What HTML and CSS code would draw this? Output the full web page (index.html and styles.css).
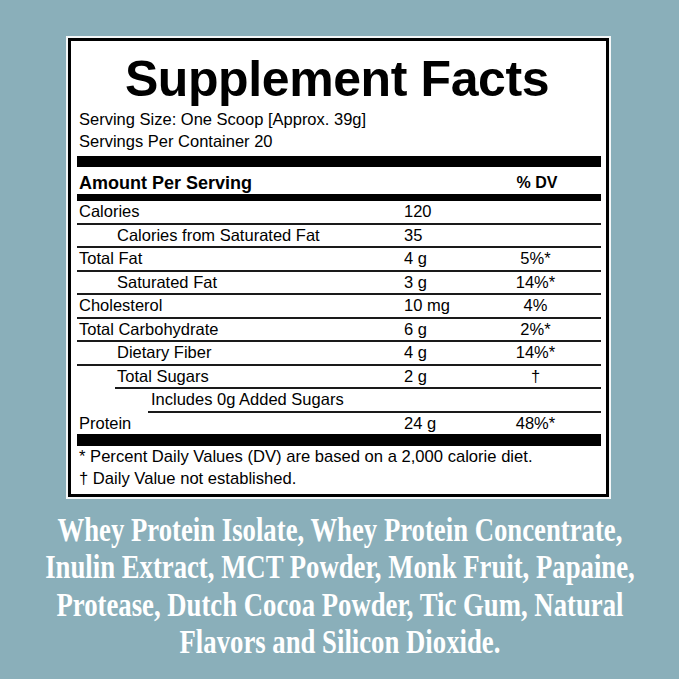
FILE: index.html
```html
<!DOCTYPE html>
<html lang="en">
<head>
<meta charset="utf-8">
<title>Supplement Facts</title>
<link rel="stylesheet" href="styles.css">
</head>
<body>
<main class="page">
  <section class="label">
    <h1 class="title">Supplement Facts</h1>
    <p class="serving">Serving Size: One Scoop [Approx. 39g]</p>
    <p class="serving">Servings Per Container 20</p>
    <div class="bar bar-thick"></div>
    <div class="head-row">
      <span class="head-name">Amount Per Serving</span>
      <span></span>
      <span class="head-dv">% DV</span>
    </div>
    <div class="bar bar-mid"></div>
    <div class="rows">
      <div class="row"><span class="name">Calories</span><span class="amt">120</span><span class="dv"></span></div>
      <div class="row"><span class="name sub">Calories from Saturated Fat</span><span class="amt">35</span><span class="dv"></span></div>
      <div class="row"><span class="name">Total Fat</span><span class="amt">4 g</span><span class="dv">5%*</span></div>
      <div class="row"><span class="name sub">Saturated Fat</span><span class="amt">3 g</span><span class="dv">14%*</span></div>
      <div class="row"><span class="name">Cholesterol</span><span class="amt">10 mg</span><span class="dv">4%</span></div>
      <div class="row"><span class="name">Total Carbohydrate</span><span class="amt">6 g</span><span class="dv">2%*</span></div>
      <div class="row"><span class="name sub">Dietary Fiber</span><span class="amt">4 g</span><span class="dv">14%*</span></div>
      <div class="row row-in1"><span class="name">Total Sugars</span><span class="amt">2 g</span><span class="dv">†</span></div>
      <div class="row row-in2"><span class="name">Includes 0g Added Sugars</span><span class="amt"></span><span class="dv"></span></div>
      <div class="row row-last"><span class="name">Protein</span><span class="amt">24 g</span><span class="dv">48%*</span></div>
    </div>
    <div class="bar bar-thick bar-end"></div>
    <p class="note">* Percent Daily Values (DV) are based on a 2,000 calorie diet.</p>
    <p class="note">† Daily Value not established.</p>
  </section>
  <section class="ingredients">
    <p class="ing-text">Whey Protein Isolate, Whey Protein Concentrate,<br>Inulin Extract, MCT Powder, Monk Fruit, Papaine,<br>Protease, Dutch Cocoa Powder, Tic Gum, Natural<br>Flavors and Silicon Dioxide.</p>
  </section>
</main>
</body>
</html>
```

FILE: styles.css
```css
html, body {
  margin: 0;
  padding: 0;
}
body {
  background: #8aafba;
  width: 679px;
  height: 679px;
  overflow: hidden;
  font-family: "Liberation Sans", Arial, sans-serif;
  color: #000;
}
.page {
  display: flex;
  flex-direction: column;
  padding-top: 38px;
}
.label {
  box-sizing: border-box;
  width: 541px;
  height: 459px;
  margin-left: 68px;
  background: #fff;
  border: 3px solid #000;
  box-shadow: 0 0 0 2px #f4f7f8;
  padding: 0 5px 0 6px;
  display: flex;
  flex-direction: column;
}
.title {
  margin: 13px 0 4px;
  font-size: 50px;
  line-height: 50px;
  font-weight: 700;
  letter-spacing: -0.4px;
  text-align: center;
  padding-right: 4px;
}
.serving {
  margin: 0;
  padding-left: 2px;
  font-size: 16.5px;
  line-height: 22px;
}
.bar {
  background: #000;
  flex-shrink: 0;
}
.bar-thick {
  height: 11px;
  margin-top: 4px;
}
.bar-mid {
  height: 7px;
}
.bar-end {
  height: 12px;
  margin-top: 0;
}
.head-row,
.row {
  display: grid;
  grid-template-columns: 327px 76px 110px;
}
.head-row {
  padding-top: 5px;
  height: 27px;
  box-sizing: border-box;
  line-height: 22px;
}
.head-name {
  font-weight: 700;
  font-size: 18px;
  padding-left: 2px;
}
.head-dv {
  font-weight: 700;
  font-size: 16px;
  text-align: center;
  padding-left: 4px;
}
.rows {
  display: flex;
  flex-direction: column;
}
.row {
  font-size: 16.5px;
  line-height: 21.5px;
  border-bottom: 2px solid #1a1a1a;
}
.row-last {
  border-bottom: none;
}
.name {
  padding-left: 2px;
  white-space: nowrap;
}
.name.sub {
  padding-left: 40px;
}
.row-in1 {
  margin-left: 38px;
  grid-template-columns: 289px 76px 110px;
}
.row-in2 {
  margin-left: 71px;
  grid-template-columns: 256px 76px 110px;
}
.row-in2 .name {
  padding-left: 3px;
}
.amt {
  white-space: nowrap;
}
.dv {
  text-align: center;
  padding-left: 1px;
}
.note {
  margin: 0;
  padding-left: 2px;
  font-size: 16.6px;
  line-height: 22px;
}
.ingredients {
  display: flex;
  justify-content: center;
  margin-top: 15px;
}
.ing-text {
  margin: 0;
  width: max-content;
  flex-shrink: 0;
  white-space: nowrap;
  font-family: "Liberation Serif", "Times New Roman", serif;
  font-weight: 700;
  font-size: 33px;
  line-height: 37.3px;
  color: #fff;
  text-align: center;
  transform: scaleX(0.81);
  transform-origin: center top;
}
```
